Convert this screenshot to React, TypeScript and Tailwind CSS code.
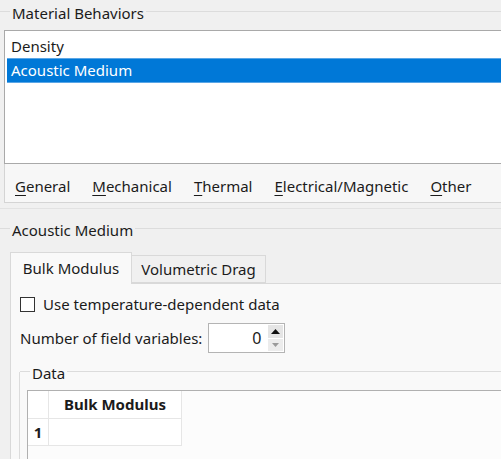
import type { ReactNode } from "react";

function GroupTitle({ title, lead, className }: { title: string; lead: number; className?: string }) {
  return (
    <div className={"flex h-[22px] " + (className ?? "")}>
      <div className="mt-[10px] h-px bg-[#dcdcdc]" style={{ width: lead }} />
      <span className="px-[2px] leading-[25px] text-[#1b1b1b]">{title}</span>
      <div className="mt-[10px] h-px flex-1 bg-[#dcdcdc]" />
    </div>
  );
}

function Mnemonic({ first, rest }: { first: string; rest: string }) {
  return (
    <span>
      <span className="underline decoration-1 underline-offset-[3px]">{first}</span>
      {rest}
    </span>
  );
}

function Tab({ label, active }: { label: string; active?: boolean }): ReactNode {
  return active ? (
    <div className="relative z-10 -mb-px flex h-[32px] w-[122px] items-center justify-center border border-b-0 border-[#d9d9d9] bg-[#f9f9f9] text-[#1b1b1b]">
      {label}
    </div>
  ) : (
    <div className="mt-[3px] flex h-[28px] w-[134px] items-center justify-center border border-l-0 border-[#d9d9d9] bg-[#f0f0f0] text-[#1b1b1b]">
      {label}
    </div>
  );
}

export default function App() {
  return (
    <div
      className="h-[459px] w-[501px] overflow-hidden bg-[#f0f0f0] text-[15px] text-[#1b1b1b]"
      style={{ fontFamily: '"Noto Sans", "Segoe UI", sans-serif' }}
    >
      {/* Material Behaviors */}
      <GroupTitle title="Material Behaviors" lead={10} className="pt-px" />
      <div className="ml-[4px] mt-[8px] h-[134px] w-[520px] border border-[#a9a9a9] bg-white px-[2px] pt-[4px]">
        <div className="flex h-[23px] items-center pl-[4px]">Density</div>
        <div className="flex h-[25px] items-center border-y border-[#5aa6e6] bg-[#0078d7] pl-[4px] text-white">
          Acoustic Medium
        </div>
      </div>

      {/* behavior menu */}
      <div className="ml-[4px] flex h-[39px] w-[520px] items-center gap-[22px] border-b border-l border-[#d4d4d4] bg-[#f7f7f7] pl-[10px] pt-[7px]">
        <Mnemonic first="G" rest="eneral" />
        <Mnemonic first="M" rest="echanical" />
        <Mnemonic first="T" rest="hermal" />
        <Mnemonic first="E" rest="lectrical/Magnetic" />
        <Mnemonic first="O" rest="ther" />
      </div>
      <div className="mt-[5px] h-px bg-[#e2e2e2]" />

      {/* Acoustic Medium */}
      <GroupTitle title="Acoustic Medium" lead={10} className="mt-[9px]" />
      <div className="ml-[10px] mt-[12px] flex items-end">
        <Tab label="Bulk Modulus" active />
        <Tab label="Volumetric Drag" />
      </div>
      <div className="ml-[10px] h-[200px] border-l border-t border-[#d9d9d9] bg-[#f9f9f9] pl-[9px] pt-[13px]">
        <label className="flex items-center gap-[8px]">
          <span className="h-[15px] w-[15px] border border-[#333333] bg-white" />
          <span className="leading-[15px]">Use temperature-dependent data</span>
        </label>

        <div className="mt-[11px] flex items-center gap-[6px]">
          <span>Number of field variables:</span>
          <div className="flex h-[30px] w-[77px] items-center border border-[#b4b4b4] bg-white pr-[1px]">
            <span className="flex-1 pr-[7px] text-right text-[16px]">0</span>
            <div className="flex h-[26px] w-[15px] flex-col gap-px">
              <div className="flex flex-1 items-center justify-center bg-[#e5e5e5]">
                <svg width="9" height="5" viewBox="0 0 9 5">
                  <path d="M0 5 L4.5 0 L9 5 Z" fill="#111" />
                </svg>
              </div>
              <div className="flex flex-1 items-center justify-center bg-[#ececec]">
                <svg width="7" height="4" viewBox="0 0 7 4">
                  <path d="M0 0 L3.5 4 L7 0 Z" fill="#9a9a9a" />
                </svg>
              </div>
            </div>
          </div>
        </div>

        {/* Data */}
        <div className="-ml-px mt-[19px] flex h-[120px] flex-col border-l border-[#dcdcdc]">
          <GroupTitle title="Data" lead={10} className="-mt-[11px]" />
          <div className="ml-[7px] mt-[7px] h-[80px] border-l border-t border-[#b0b0b0] bg-[#fcfcfc]">
            <div className="flex h-[28px]">
              <div className="w-[21px] border-b border-r border-[#e6e6e6] bg-white" />
              <div className="flex w-[133px] items-center justify-center border-b border-r border-[#e6e6e6] bg-white font-bold">
                Bulk Modulus
              </div>
            </div>
            <div className="flex h-[27px]">
              <div className="flex w-[21px] items-center justify-center border-b border-r border-[#e6e6e6] bg-white font-bold">
                1
              </div>
              <div className="w-[133px] border-b border-r border-[#e6e6e6] bg-white" />
            </div>
          </div>
        </div>
      </div>
    </div>
  );
}
